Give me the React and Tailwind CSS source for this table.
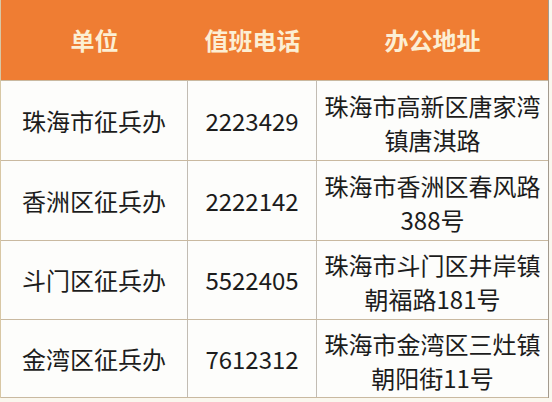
import React from "react";

const rows = [
  { unit: "珠海市征兵办", phone: "2223429", addr: ["珠海市高新区唐家湾", "镇唐淇路"], h: "h-[80px]" },
  { unit: "香洲区征兵办", phone: "2222142", addr: ["珠海市香洲区春风路", "388号"], h: "h-[80px]" },
  { unit: "斗门区征兵办", phone: "5522405", addr: ["珠海市斗门区井岸镇", "朝福路181号"], h: "h-[79px]" },
  { unit: "金湾区征兵办", phone: "7612312", addr: ["珠海市金湾区三灶镇", "朝阳街11号"], h: "h-[79px]" },
];

const font = { fontFamily: '"Microsoft YaHei", "Noto Sans CJK SC", sans-serif' };

export default function App() {
  return (
    <div className="w-[552px] h-[402px] bg-[#faf7ee] overflow-hidden" style={font}>
      <div className="w-[549px] border-l border-r border-l-[#d8c7a4] border-r-[#a39a8e]">
        <div className="grid grid-cols-[187px_129px_231px] h-[80px] bg-[#ef7d33] text-[#fcefd4] text-[24px] font-bold">
          <div className="flex items-center justify-center">单位</div>
          <div className="flex items-center justify-center">值班电话</div>
          <div className="flex items-center justify-center">办公地址</div>
        </div>
        {rows.map((r, i) => (
          <div
            key={`row_${i}`}
            className={`grid grid-cols-[187px_129px_231px] ${r.h} bg-[#fdfdfb] border-t border-[#c9b9a0] text-[24px] text-[#1c1c1c] ${i === rows.length - 1 ? "border-b" : ""}`}
          >
            <div className="flex items-center justify-center border-r border-[#c2bcb3]">{r.unit}</div>
            <div className="flex items-center justify-center border-r border-[#c2bcb3]">{r.phone}</div>
            <div className="flex flex-col items-center justify-center leading-[34px] pt-1">
              <span>{r.addr[0]}</span>
              <span>{r.addr[1]}</span>
            </div>
          </div>
        ))}
      </div>
    </div>
  );
}
